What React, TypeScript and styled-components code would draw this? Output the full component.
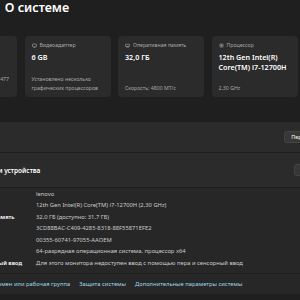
import React from 'react';
import styled, { createGlobalStyle } from 'styled-components';

const GlobalStyle = createGlobalStyle`
  html, body {
    margin: 0;
    padding: 0;
    background: #1f1f1f;
    overflow: hidden;
  }
  body {
    font-family: 'Noto Sans', 'Open Sans', sans-serif;
    color: #ffffff;
  }
`;

const Page = styled.div`
  width: 431px;
  margin-left: -69px;
  display: flex;
  flex-direction: column;
`;

const Header = styled.header`
  display: flex;
  align-items: center;
  height: 16px;
  margin-top: -1px;
  margin-bottom: 21px;
  font-size: 13px;
  font-weight: 600;
`;

const Crumb = styled.span`
  color: #cfcfcf;
`;

const CrumbChevron = styled.span`
  margin: 0 7px;
  color: #cfcfcf;
`;

const Title = styled.h1`
  margin: 0;
  font-size: 12.5px;
  font-weight: 600;
  color: #ffffff;
`;

const CardRow = styled.div`
  display: grid;
  grid-template-columns: repeat(4, 86px);
  column-gap: 7.5px;
`;

const SpecCard = styled.div`
  height: 61px;
  box-sizing: border-box;
  padding: 6px 7px 4px;
  background: #2b2b2b;
  border-radius: 4px;
  display: flex;
  flex-direction: column;
`;

const CardLabel = styled.div`
  display: flex;
  align-items: center;
  gap: 3px;
  font-size: 5.2px;
  line-height: 7px;
  color: #a9a9a9;
`;

const CardValue = styled.div`
  margin-top: 3px;
  font-size: 7.2px;
  line-height: 10px;
  font-weight: 600;
`;

const CardNote = styled.div`
  margin-top: auto;
  font-size: 5.2px;
  line-height: 9px;
  color: #a9a9a9;
`;

const DeviceRow = styled.div`
  margin-top: 25px;
  height: 30px;
  box-sizing: border-box;
  padding: 0 0 0 18px;
  background: #2b2b2b;
  border-radius: 4px;
  display: flex;
  align-items: center;
  justify-content: space-between;
`;

const DeviceName = styled.span`
  font-size: 6px;
  font-weight: 600;
`;

const Button = styled.button`
  height: 12px;
  padding: 0 6px;
  border: 1px solid #444444;
  border-radius: 3px;
  background: #373737;
  color: #ffffff;
  font-family: inherit;
  font-size: 5.5px;
  line-height: 10px;
`;

const Expander = styled.section`
  margin-top: 1px;
  background: #272727;
  border-radius: 4px;
  overflow: hidden;
`;

const ExpanderHead = styled.div`
  height: 34px;
  box-sizing: border-box;
  padding: 0 7px;
  background: #2b2b2b;
  display: flex;
  align-items: center;
  gap: 4px;
`;

const ExpanderTitle = styled.h2`
  flex: 1;
  margin: 0;
  font-size: 6.5px;
  font-weight: 600;
`;

const HeadActions = styled.div`
  display: flex;
  align-items: center;
  gap: 8px;
`;

const SpecList = styled.dl`
  margin: 0;
  padding: 0 0 4px 23px;
  border-top: 1px solid #1d1d1d;
  display: grid;
  grid-template-columns: 82px 1fr;
  grid-auto-rows: 11.5px;
  align-items: center;
  font-size: 5.8px;
`;

const SpecLabel = styled.dt`
  font-size: 5.7px;
  font-weight: 600;
  color: #ffffff;
`;

const SpecValue = styled.dd`
  margin: 0;
  color: #cccccc;
  white-space: nowrap;
`;

const RelatedLinks = styled.nav`
  height: 21px;
  box-sizing: border-box;
  padding-left: 7px;
  border-top: 1px solid #1d1d1d;
  display: flex;
  align-items: center;
  gap: 9px;
  font-size: 5.8px;
`;

const LinksLabel = styled.span`
  font-weight: 600;
`;

const Link = styled.a`
  color: #9fd8ea;
  text-decoration: none;
  white-space: nowrap;
`;

const GpuIcon = () => (
  <svg width="5" height="5" viewBox="0 0 10 10" fill="none" stroke="#a9a9a9" strokeWidth="1.2">
    <rect x="1" y="2" width="8" height="5.5" rx="0.8" />
    <path d="M3.5 9h3" />
  </svg>
);

const RamIcon = () => (
  <svg width="5" height="5" viewBox="0 0 10 10" fill="none" stroke="#a9a9a9" strokeWidth="1.2">
    <rect x="1" y="2.5" width="8" height="4.5" rx="0.6" />
    <path d="M3 7v2M5 7v2M7 7v2" />
  </svg>
);

const CpuIcon = () => (
  <svg width="5" height="5" viewBox="0 0 10 10" fill="none" stroke="#a9a9a9" strokeWidth="1.2">
    <rect x="2" y="2" width="6" height="6" rx="0.6" />
    <rect x="4" y="4" width="2" height="2" />
  </svg>
);

const DiskIcon = () => (
  <svg width="5" height="5" viewBox="0 0 10 10" fill="none" stroke="#a9a9a9" strokeWidth="1.2">
    <rect x="1" y="3" width="8" height="4" rx="0.8" />
  </svg>
);

const PcIcon = () => (
  <svg width="7" height="7" viewBox="0 0 10 10" fill="none" stroke="#ffffff" strokeWidth="0.9">
    <rect x="1" y="1.5" width="8" height="5.5" rx="0.6" />
    <path d="M3 9h4M5 7v2" />
  </svg>
);

const Chevron = () => (
  <svg width="7" height="7" viewBox="0 0 10 10" fill="none" stroke="#ffffff" strokeWidth="1">
    <path d="M2 6.5L5 3.5L8 6.5" />
  </svg>
);

const cards = [
  { icon: <DiskIcon />, label: 'Хранилище', value: '477 ГБ', note: 'Использовано 133 ГБ из 477 ГБ' },
  { icon: <GpuIcon />, label: 'Видеоадаптер', value: '6 GB', note: 'Установлено несколько графических процессоров' },
  { icon: <RamIcon />, label: 'Оперативная память', value: '32,0 ГБ', note: 'Скорость: 4800 МТ/с' },
  { icon: <CpuIcon />, label: 'Процессор', value: '12th Gen Intel(R) Core(TM) i7-12700H', note: '2,30 GHz' },
];

const specs = [
  ['Имя устройства', 'lenovo'],
  ['Процессор', '12th Gen Intel(R) Core(TM) i7-12700H (2,30 GHz)'],
  ['Оперативная память', '32,0 ГБ (доступно: 31,7 ГБ)'],
  ['Код устройства', '3CD88BAC-C409-4285-8318-88F55871EFE2'],
  ['Код продукта', '00355-60741-97055-AAOEM'],
  ['Тип системы', '64-разрядная операционная система, процессор x64'],
  ['Перо и сенсорный ввод', 'Для этого монитора недоступен ввод с помощью пера и сенсорный ввод'],
];

const App: React.FC = () => {
  return (
    <>
      <GlobalStyle />
      <Page>
        <Header>
          <Crumb>Система</Crumb>
          <CrumbChevron>›</CrumbChevron>
          <Title>О системе</Title>
        </Header>

        <CardRow>
          {cards.map((card) => (
            <SpecCard key={card.label}>
              <CardLabel>
                {card.icon}
                {card.label}
              </CardLabel>
              <CardValue>{card.value}</CardValue>
              <CardNote>{card.note}</CardNote>
            </SpecCard>
          ))}
        </CardRow>

        <DeviceRow>
          <DeviceName>lenovo</DeviceName>
          <Button>Переименовать этот ПК</Button>
        </DeviceRow>

        <Expander>
          <ExpanderHead>
            <PcIcon />
            <ExpanderTitle>Характеристики устройства</ExpanderTitle>
            <HeadActions>
              <Button>Копировать</Button>
              <Chevron />
            </HeadActions>
          </ExpanderHead>
          <SpecList>
            {specs.map(([label, value]) => (
              <React.Fragment key={label}>
                <SpecLabel>{label}</SpecLabel>
                <SpecValue>{value}</SpecValue>
              </React.Fragment>
            ))}
          </SpecList>
          <RelatedLinks>
            <LinksLabel>Ссылки по теме</LinksLabel>
            <Link href="#">Домен или рабочая группа</Link>
            <Link href="#">Защита системы</Link>
            <Link href="#">Дополнительные параметры системы</Link>
          </RelatedLinks>
        </Expander>
      </Page>
    </>
  );
};

export default App;
